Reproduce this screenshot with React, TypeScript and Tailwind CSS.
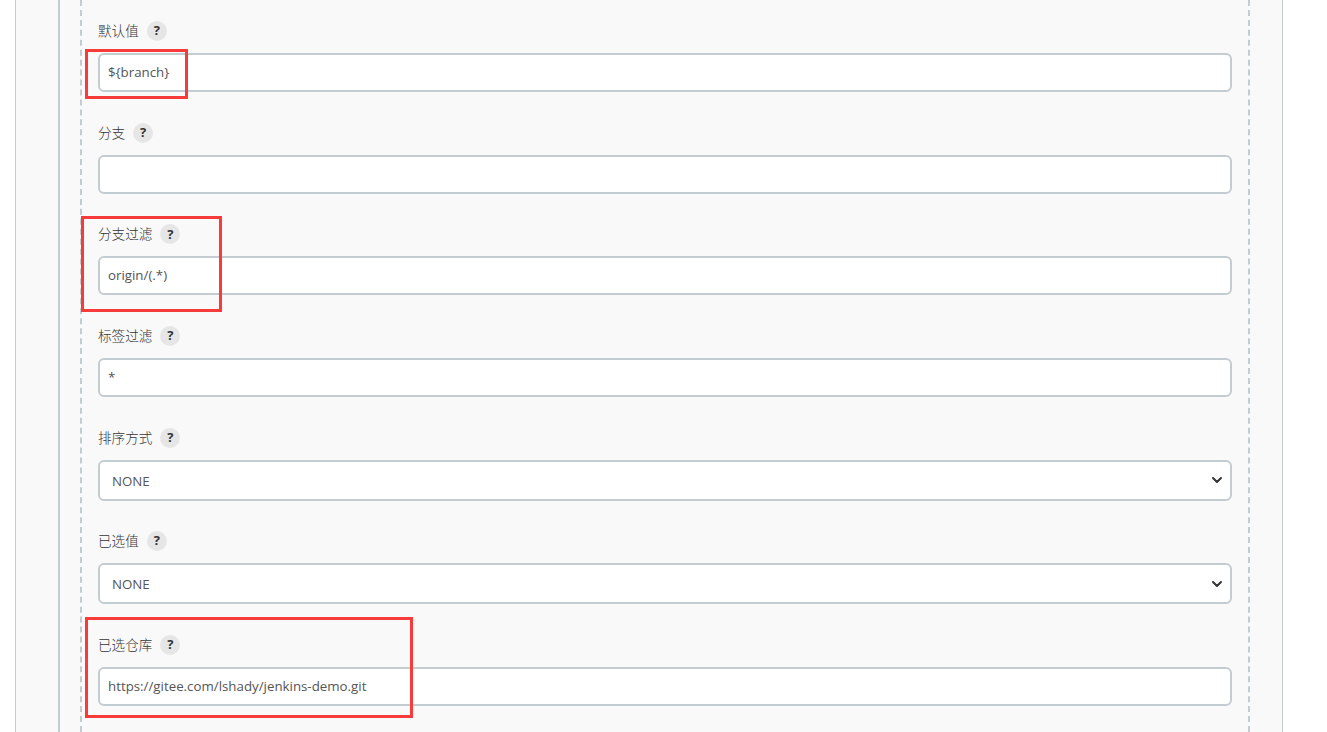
import { ChevronDown } from 'lucide-react';

const font = "[font-family:'Open_Sans','Noto_Sans_CJK_SC',sans-serif]";

function Label({ text }: { text: string }) {
  return (
    <div className="mb-[12px] flex h-[20px] items-center gap-[8px]">
      <span className="text-[13.6px] font-light leading-[20px] text-[#333]">{text}</span>
      <span className="flex h-[20px] w-[20px] items-center justify-center rounded-full bg-[#e6e6e6] text-[13px] font-bold text-[#333]">?</span>
    </div>
  );
}

function TextRow({ label, value }: { label: string; value: string }) {
  return (
    <div className="mb-[30.67px]">
      <Label text={label} />
      <div className="flex h-[39px] items-center rounded-[6px] border-2 border-[#c3ccd1] bg-white pl-[8px] pt-px text-[13.3px] text-[#555]">
        {value}
      </div>
    </div>
  );
}

function SelectRow({ label, value }: { label: string; value: string }) {
  return (
    <div className="mb-[30.5px]">
      <Label text={label} />
      <div className="flex h-[41px] items-center justify-between rounded-[6px] border-2 border-[#c3ccd1] bg-white pl-[12px] pr-[5px] text-[13.3px] text-[#555]">
        <span className="pt-[3px]">{value}</span>
        <ChevronDown size={16} strokeWidth={3} className="text-[#333]" />
      </div>
    </div>
  );
}

export default function App() {
  return (
    <div className={`relative h-[732px] w-full overflow-hidden bg-white pl-[15px] ${font}`}>
      <div className="h-full w-[1268px] border-x border-[#c3ccd1] bg-[#f9f9f9] pl-[42px]">
        <div className="h-full border-l-2 border-[#c3ccd1] pl-[20px]">
          <div className="h-full w-[1170px] border-x-2 border-dashed border-[#c3ccd1] pl-[16px] pr-[16px] pt-[21px]">
            <TextRow label="默认值" value="${branch}" />
            <TextRow label="分支" value="" />
            <TextRow label="分支过滤" value="origin/(.*)" />
            <TextRow label="标签过滤" value="*" />
            <SelectRow label="排序方式" value="NONE" />
            <SelectRow label="已选值" value="NONE" />
            <TextRow label="已选仓库" value="https://gitee.com/lshady/jenkins-demo.git" />
          </div>
        </div>
      </div>
      <div className="absolute left-[85px] top-[49px] h-[50px] w-[103px] border-[3px] border-[#f73b3b]" />
      <div className="absolute left-[81px] top-[216px] h-[96px] w-[141px] border-[3px] border-[#f73b3b]" />
      <div className="absolute left-[85px] top-[617px] h-[101px] w-[328px] border-[3px] border-[#f73b3b]" />
    </div>
  );
}
